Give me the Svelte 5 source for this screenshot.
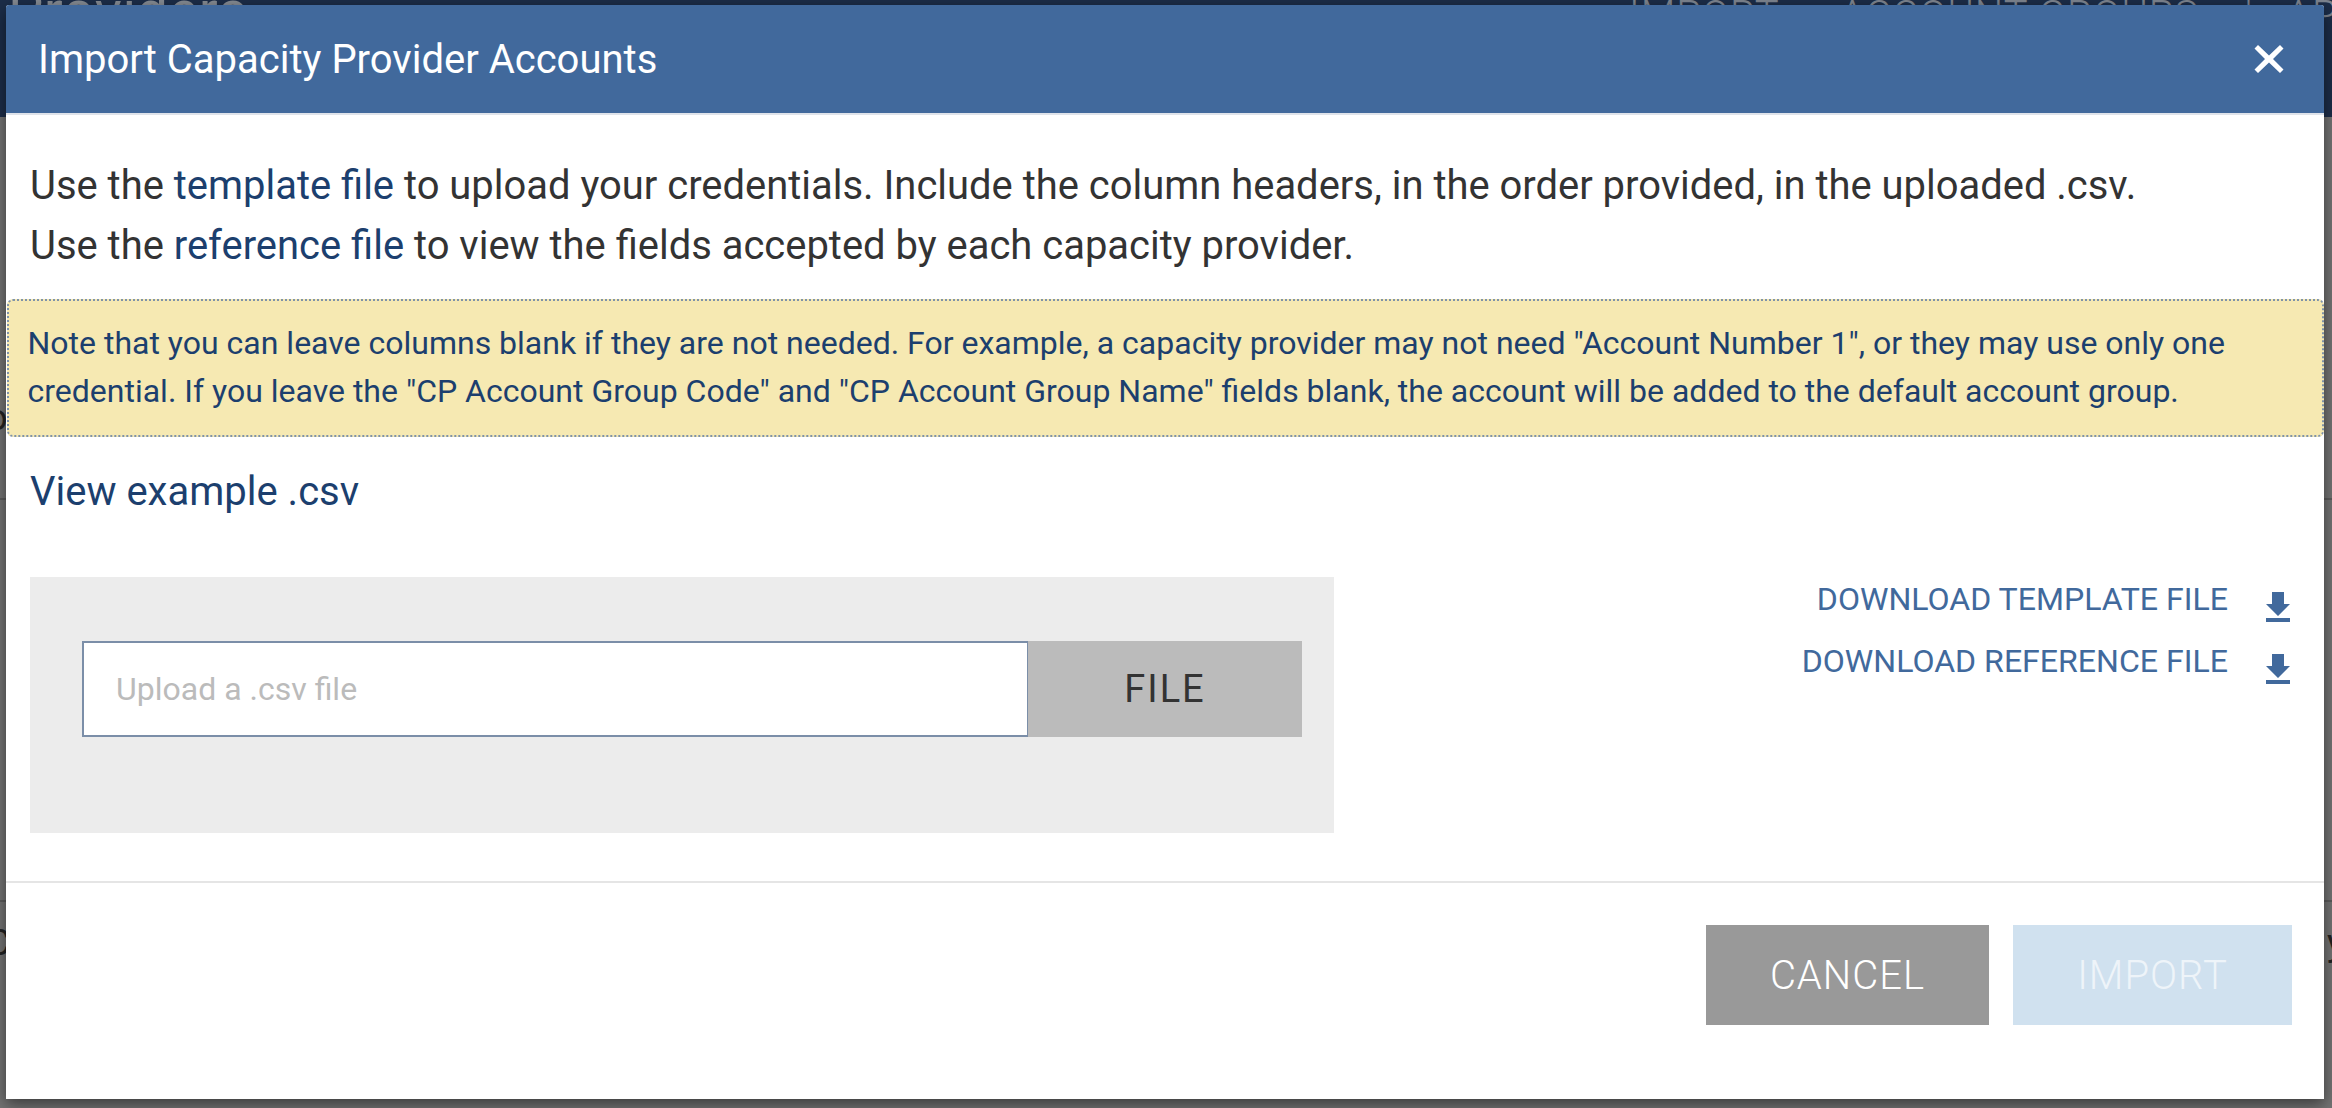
<script>
  const intro = "to upload your credentials. Include the column headers, in the order provided, in the uploaded .csv.";
</script>

<div class="page">
  <header class="topbar">
    <h1>Providers</h1>
    <nav>
      <span>IMPORT</span>
      <span>ACCOUNT GROUPS</span>
      <span class="pipe">|</span>
      <span>AP</span>
    </nav>
  </header>
  <div class="row row-a"><span class="frag">o'</span></div>
  <div class="row row-b"></div>
  <div class="row row-c"><span class="frag">C</span><span class="frag">y</span></div>

  <div class="modal" role="dialog" aria-label="Import Capacity Provider Accounts">
    <div class="head">
      <h2>Import Capacity Provider Accounts</h2>
      <button class="close" aria-label="Close">
        <svg viewBox="0 0 30 30" width="30" height="30"><path d="M4 1 15 11.500 26 1 29.500 4.500 19 15 29.500 25.500 26 29 15 18.500 4 29 .5 25.500 11 15 .5 4.500z" fill="#fff"/></svg>
      </button>
    </div>
    <div class="intro">
      <p>Use the <a href="#t">template file</a> {intro}</p>
      <p>Use the <a href="#r">reference file</a> to view the fields accepted by each capacity provider.</p>
    </div>
    <div class="note">Note that you can leave columns blank if they are not needed. For example, a capacity provider may not need "Account Number 1", or they may use only one credential. If you leave the "CP Account Group Code" and "CP Account Group Name" fields blank, the account will be added to the default account group.</div>
    <a class="example" href="#e">View example .csv</a>
    <div class="work">
      <div class="panel">
        <div class="field">
          <input type="text" placeholder="Upload a .csv file" />
          <button class="file">FILE</button>
        </div>
      </div>
      <div class="downloads">
        <a href="#t">DOWNLOAD TEMPLATE FILE
          <svg viewBox="0 0 24 30" width="24" height="30"><path d="M6 0h12v12h6L12 24 0 12h6zM0 26h24v4H0z" fill="#41699c"/></svg>
        </a>
        <a href="#r">DOWNLOAD REFERENCE FILE
          <svg viewBox="0 0 24 30" width="24" height="30"><path d="M6 0h12v12h6L12 24 0 12h6zM0 26h24v4H0z" fill="#41699c"/></svg>
        </a>
      </div>
    </div>
    <div class="foot">
      <button class="cancel">CANCEL</button>
      <button class="import">IMPORT</button>
    </div>
  </div>
</div>

<style>
  :global(body) { margin: 0; background: #727272; }
  .page {
    position: relative; width: 2332px; height: 1108px; overflow: hidden;
    background: #737373; font-family: Roboto, "Liberation Sans", sans-serif;
  }
  .topbar {
    height: 117px; background: #1c2d48; display: flex; justify-content: space-between;
    padding-left: 8px; color: #7e8590; box-sizing: border-box; overflow: hidden;
  }
  .topbar h1 { margin: -22px 0 0; font-size: 56px; line-height: 66px; font-weight: 400; color: #858b93; letter-spacing: 0.5px; white-space: nowrap; }
  .topbar nav { flex: none; width: 703px; display: flex; gap: 60px; margin: -5px 0 0; font-size: 40px; line-height: 42px; font-weight: 300; letter-spacing: 1px; white-space: nowrap; }
  .topbar .pipe { margin: 0 -28px 0 -15px; }
  .row { display: flex; justify-content: space-between; box-sizing: border-box; border-bottom: 2px solid #5c5c5c; color: #222; font-size: 36px; line-height: 40px; }
  .row-a { height: 383px; padding-top: 281px; }
  .row-b { height: 402px; }
  .row-c { height: 206px; padding-top: 21px; border-bottom: 0; }
  .frag { margin-left: -13px; }
  .frag + .frag { margin-left: 0; margin-right: -12px; }

  .modal {
    position: absolute; left: 6px; top: 5px; width: 2318px; height: 1094px;
    background: #fff; box-shadow: 0 5px 15px rgba(0,0,0,.5); border-radius: 3px 3px 0 0;
    display: flex; flex-direction: column;
  }
  .head {
    height: 108px; flex: none; background: #41699c; border-bottom: 2px solid #dfe3ea;
    display: flex; align-items: center; justify-content: space-between;
    padding: 0 40px 0 32px; border-radius: 3px 3px 0 0;
  }
  .head h2 { margin: 2px 0 0; color: #fff; font-size: 40px; font-weight: 400; line-height: 44px; }
  .close { padding: 0; border: 0; background: none; display: flex; }
  .intro { padding: 40.500px 24px 0; color: #333; font-size: 39.950px; line-height: 60px; height: 143.500px; flex: none; }
  .intro p { margin: 0; }
  a { color: #1c3f6e; text-decoration: none; }
  .note {
    flex: none; box-sizing: border-box; height: 138px; margin-left: 1px; border: 2px dotted #7f93a9; border-radius: 6px;
    background: #f6e9b2; color: #1c3f6e; font-size: 32px; line-height: 48px; padding: 17.500px 20px 0 18.500px;
  }
  .example { display: block; margin: 32px 0 0 24px; font-size: 40px; line-height: 46px; height: 61px; flex: none; }
  .work { display: flex; justify-content: space-between; margin: 47px 34px 0 24px; flex: none; }
  .panel { width: 1304px; height: 256px; box-sizing: border-box; background: #ececec; padding: 64px 32px 0 52px; }
  .field { display: flex; height: 96px; }
  .field input {
    flex: 1; min-width: 0; box-sizing: border-box; border: 2px solid #7b8ea8; border-width: 2px 1px; border-left-width: 2px; outline: 0; background: #fff;
    padding: 0 32px; font: 400 32px Roboto, sans-serif; color: #333;
  }
  .field input::placeholder { color: #bbb; opacity: 1; }
  .file { width: 274px; border: 0; background: #bbb; color: #333; font: 400 38px Roboto, sans-serif; letter-spacing: 2px; padding: 0; }
  .downloads { display: flex; flex-direction: column; gap: 20px; align-items: flex-end; padding-top: 1px; }
  .downloads a { display: flex; align-items: flex-start; gap: 38px; color: #41699c; font-size: 32.100px; line-height: 42px; height: 42px; }
  .downloads svg { margin-top: 14px; }
  .foot {
    flex: 1; margin-top: 48px; border-top: 2px solid #e5e5e5; padding: 42px 32px 0 0;
    display: flex; justify-content: flex-end; align-items: flex-start; gap: 24px;
  }
  .foot button { height: 100px; border: 0; color: #fff; font: 300 40px Roboto, sans-serif; letter-spacing: 1px; padding: 0; }
  .cancel { width: 283px; background: #999; }
  .import { width: 279px; background: #d0e1ef; color: #eef4f9 !important; }
</style>
